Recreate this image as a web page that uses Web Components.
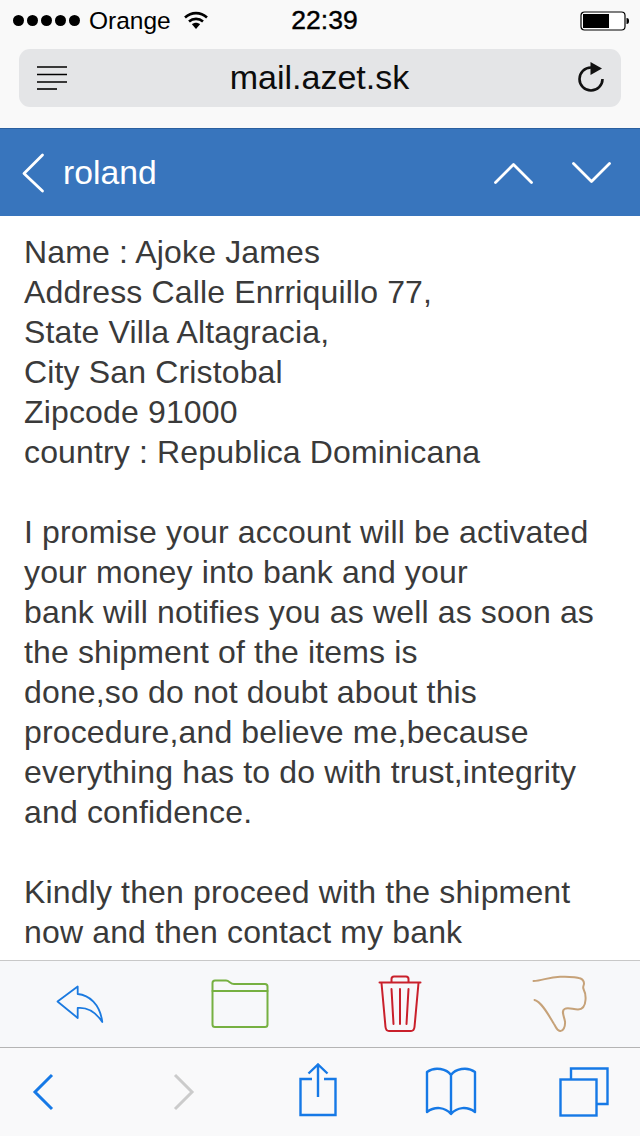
<!DOCTYPE html>
<html>
<head>
<meta charset="utf-8">
<title>mail.azet.sk</title>
<style>
    html, body { margin: 0; padding: 0; background: #fff; }
    body {
        width: 640px;
        height: 1136px;
        overflow: hidden;
        display: flex;
        flex-direction: column;
        font-family: "Liberation Sans", Arial, sans-serif;
    }
</style>
</head>
<body>
<browser-chrome carrier="Orange" time="22:39" host="mail.azet.sk"></browser-chrome>
<mail-header sender="roland"></mail-header>
<mail-body>Name : Ajoke James<br>
Address Calle Enrriquillo 77,<br>
State Villa Altagracia,<br>
City San Cristobal<br>
Zipcode 91000<br>
country : Republica Dominicana<br>
<br>
I promise your account will be activated<br>
your money into bank and your<br>
bank will notifies you as well as soon as<br>
the shipment of the items is<br>
done,so do not doubt about this<br>
procedure,and believe me,because<br>
everything has to do with trust,integrity<br>
and confidence.<br>
<br>
Kindly then proceed with the shipment<br>
now and then contact my bank</mail-body>
<mail-actions></mail-actions>
<safari-toolbar></safari-toolbar>

<script>
class BrowserChrome extends HTMLElement {
    constructor() {
        super();
        this.attachShadow({ mode: 'open' });
        this.shadowRoot.innerHTML = `
            <style>
                :host {
                    display: block;
                    flex: none;
                    height: 128px;
                    background: #f9f9f9;
                    color: #000;
                }
                .status {
                    height: 41px;
                    display: grid;
                    grid-template-columns: 1fr auto 1fr;
                    align-items: center;
                    font-size: 24.5px;
                }
                .left { display: flex; align-items: center; padding-left: 13px; }
                .dots { display: flex; gap: 3px; margin-right: 9px; }
                .dots i { width: 11px; height: 11px; border-radius: 50%; background: #000; }
                .wifi { margin-left: 13px; }
                .time { font-size: 26.5px; padding-left: 9px; -webkit-text-stroke: 0.4px #000; }
                .right { display: flex; justify-content: flex-end; padding-right: 10px; }
                .bar {
                    height: 58px;
                    margin: 8px 19px 0;
                    padding: 0 16px 0 18px;
                    border-radius: 11px;
                    background: #e4e5e7;
                    display: flex;
                    align-items: center;
                    justify-content: space-between;
                }
                .host { font-size: 34px; color: #0c0c0c; padding-bottom: 1px; margin-right: 5px; }
                .reload { margin-top: -2px; }
                svg { display: block; }
            </style>
            <div class="status">
                <div class="left">
                    <span class="dots"><i></i><i></i><i></i><i></i><i></i></span>
                    <span class="carrier"></span>
                    <svg class="wifi" width="24" height="19" viewBox="0 0 24 19">
                        <path d="M1 6.5 C7.5 .6 16.5 .6 23 6.5" fill="none" stroke="#000" stroke-width="2.6"/>
                        <path d="M5 10.5 C9 7 15 7 19 10.5" fill="none" stroke="#000" stroke-width="2.6"/>
                        <path d="M7.9 13.2 C10.4 11.2 13.6 11.2 16.1 13.2 L12 18 Z" fill="#000"/>
                    </svg>
                </div>
                <div class="time"></div>
                <div class="right">
                    <svg width="50" height="20" viewBox="0 0 50 20">
                        <rect x="1" y="1" width="44" height="18" rx="3.5" fill="#fff" stroke="#000" stroke-width="1.2"/>
                        <rect x="3" y="3" width="26" height="14" fill="#000"/>
                        <path d="M46.5 7 C48.5 7 49 8 49 10 C49 12 48.5 13 46.5 13 Z" fill="#000"/>
                    </svg>
                </div>
            </div>
            <div class="bar">
                <svg width="30" height="24" viewBox="0 0 30 24">
                    <path d="M0 1h30M0 8.5h30M0 16h30" stroke="#000" stroke-width="1.6"/>
                    <path d="M0 23h20" stroke="#000" stroke-width="1.6"/>
                </svg>
                <span class="host"></span>
                <svg class="reload" width="28" height="30" viewBox="0 0 28 30">
                    <path d="M14 5.5 A11.5 11.5 0 1 0 25.5 17" fill="none" stroke="#111" stroke-width="2.6"/>
                    <path d="M13.5 0 L25 6.5 L13.5 13 Z" fill="#111"/>
                </svg>
            </div>
        `;
    }

    connectedCallback() {
        this.shadowRoot.querySelector('.carrier').textContent = this.getAttribute('carrier') || '';
        this.shadowRoot.querySelector('.time').textContent = this.getAttribute('time') || '';
        this.shadowRoot.querySelector('.host').textContent = this.getAttribute('host') || '';
    }
}

class MailHeader extends HTMLElement {
    constructor() {
        super();
        this.attachShadow({ mode: 'open' });
        this.shadowRoot.innerHTML = `
            <style>
                :host {
                    display: flex;
                    flex: none;
                    box-sizing: border-box;
                    height: 88px;
                    align-items: center;
                    padding: 0 29px 0 21px;
                    background: #3875bd;
                    border-top: 1px solid #2b5f9f;
                    color: #fff;
                }
                .sender { font-size: 33.7px; margin-left: 18px; flex: 1; }
                svg { display: block; fill: none; stroke: #fff; stroke-width: 2.8; stroke-linecap: round; stroke-linejoin: round; }
                .up { margin-right: 39px; }
            </style>
            <svg width="24" height="40" viewBox="0 0 24 40"><path d="M21.5 2 L3 20.5 L21.5 38"/></svg>
            <span class="sender"></span>
            <svg class="up" width="39" height="22" viewBox="0 0 39 22"><path d="M1.5 20.5 L19.5 2.5 L37.5 20.5"/></svg>
            <svg width="39" height="22" viewBox="0 0 39 22"><path d="M1.5 1.5 L19.5 19.5 L37.5 1.5"/></svg>
        `;
    }

    connectedCallback() {
        this.shadowRoot.querySelector('.sender').textContent = this.getAttribute('sender') || '';
    }
}

class MailBody extends HTMLElement {
    constructor() {
        super();
        this.attachShadow({ mode: 'open' });
        this.shadowRoot.innerHTML = `
            <style>
                :host {
                    display: block;
                    flex: 1;
                    min-height: 0;
                    overflow: hidden;
                    padding: 16px 24px 0;
                    background: #fff;
                    color: #3a3a3a;
                    font-size: 32px;
                    letter-spacing: 0.15px;
                    line-height: 40px;
                    white-space: nowrap;
                }
            </style>
            <slot></slot>
        `;
    }
}

class MailActions extends HTMLElement {
    constructor() {
        super();
        this.attachShadow({ mode: 'open' });
        this.shadowRoot.innerHTML = `
            <style>
                :host {
                    display: grid;
                    flex: none;
                    box-sizing: border-box;
                    height: 88px;
                    grid-template-columns: repeat(4, 1fr);
                    align-items: center;
                    justify-items: center;
                    background: #f7f8fa;
                    border-top: 1px solid #c8c8c8;
                    border-bottom: 1px solid #b4b4b4;
                }
                svg { display: block; fill: none; stroke-linejoin: round; stroke-linecap: round; }
            </style>
            <svg width="48" height="38" viewBox="0 0 48 38" stroke="#1b7ae0" stroke-width="1.8">
                <path d="M1.5 16.5 L21.7 1.5 V9 C33 10 44 19 46.3 37 C41 29 33 22 21.7 23 V33 Z"/>
            </svg>
            <svg width="58" height="50" viewBox="0 0 58 50" stroke="#76b041" stroke-width="2">
                <path d="M1.5 12 V4 Q1.5 1.500 4 1.500 H15 C18.500 1.500 19 5 23 5 H54 Q56.500 5 56.500 7.500 V12"/>
                <path d="M1.5 12 H56.5 V45.5 Q56.5 48 54 48 H4 Q1.5 48 1.5 45.5 Z"/>
            </svg>
            <svg width="44" height="58" viewBox="0 0 44 58" stroke="#c9202b" stroke-width="2">
                <path d="M1.5 7.5 H42.5"/>
                <path d="M13.5 7 V4 Q13.5 1.5 16 1.5 H28 Q30.5 1.5 30.5 4 V7"/>
                <path d="M3.5 8 L7.5 52 Q8 56 11 56 H33 Q36 56 36.5 52 L40.5 8"/>
                <path d="M13.5 14 L15.5 49 M22 14 V49 M30.5 14 L28.5 49"/>
            </svg>
            <svg width="56" height="58" viewBox="0 0 56 58" stroke="#c6a279" stroke-width="2">
                <path d="M1.5 6 C10 6 16 2 28 1.700 C36 1.500 44 1.500 48 3.300 C51 4.500 52 6 52 8.500 C52 10.500 50.500 11.500 51.500 14 C52.500 16 54 20 53.500 25 C53.200 30 51 34.300 46 34.500 C41 34.500 36 32 32.500 34 C29 36 32 41 33 46.500 C33.500 52 31 56.500 28 56 C24.500 55.500 24 52 22 49 C17 41 10 27 2.500 25"/>
            </svg>
        `;
    }
}

class SafariToolbar extends HTMLElement {
    constructor() {
        super();
        this.attachShadow({ mode: 'open' });
        this.shadowRoot.innerHTML = `
            <style>
                :host {
                    display: grid;
                    flex: none;
                    height: 88px;
                    grid-template-columns: 86px 195px 74px 192px 73px;
                    align-items: center;
                    justify-items: center;
                    background: #f9f9fa;
                }
                svg { display: block; fill: none; stroke: #1679e6; stroke-width: 2.4; }
                .share { margin-top: -4px; }
            </style>
            <svg width="22" height="38" viewBox="0 0 22 38"><path d="M20 2 L3 19 L20 36" stroke-width="3"/></svg>
            <svg width="22" height="38" viewBox="0 0 22 38" style="stroke:#cbcbcb"><path d="M2 2 L19 19 L2 36" stroke-width="3"/></svg>
            <svg class="share" width="38" height="54" viewBox="0 0 38 54"><path d="M13 16 H1.500 V52 H36.500 V16 H25 M19 34 V2 M9.500 10.500 L19 1.500 L28.500 10.500"/></svg>
            <svg width="52" height="50" viewBox="0 0 52 50"><path d="M26 8 C22 2 10 -1 2 5 V45 C10 39 20 40 26 47 C32 40 42 39 50 45 V5 C42 -1 30 2 26 8 Z M26 8 V47" stroke-linejoin="round"/></svg>
            <svg width="50" height="50" viewBox="0 0 50 50"><path d="M12 12 V1.500 H48.500 V37 H38"/><rect x="1.500" y="12.500" width="36" height="36"/></svg>
        `;
    }
}

customElements.define('browser-chrome', BrowserChrome);
customElements.define('mail-header', MailHeader);
customElements.define('mail-body', MailBody);
customElements.define('mail-actions', MailActions);
customElements.define('safari-toolbar', SafariToolbar);
</script>
</body>
</html>
